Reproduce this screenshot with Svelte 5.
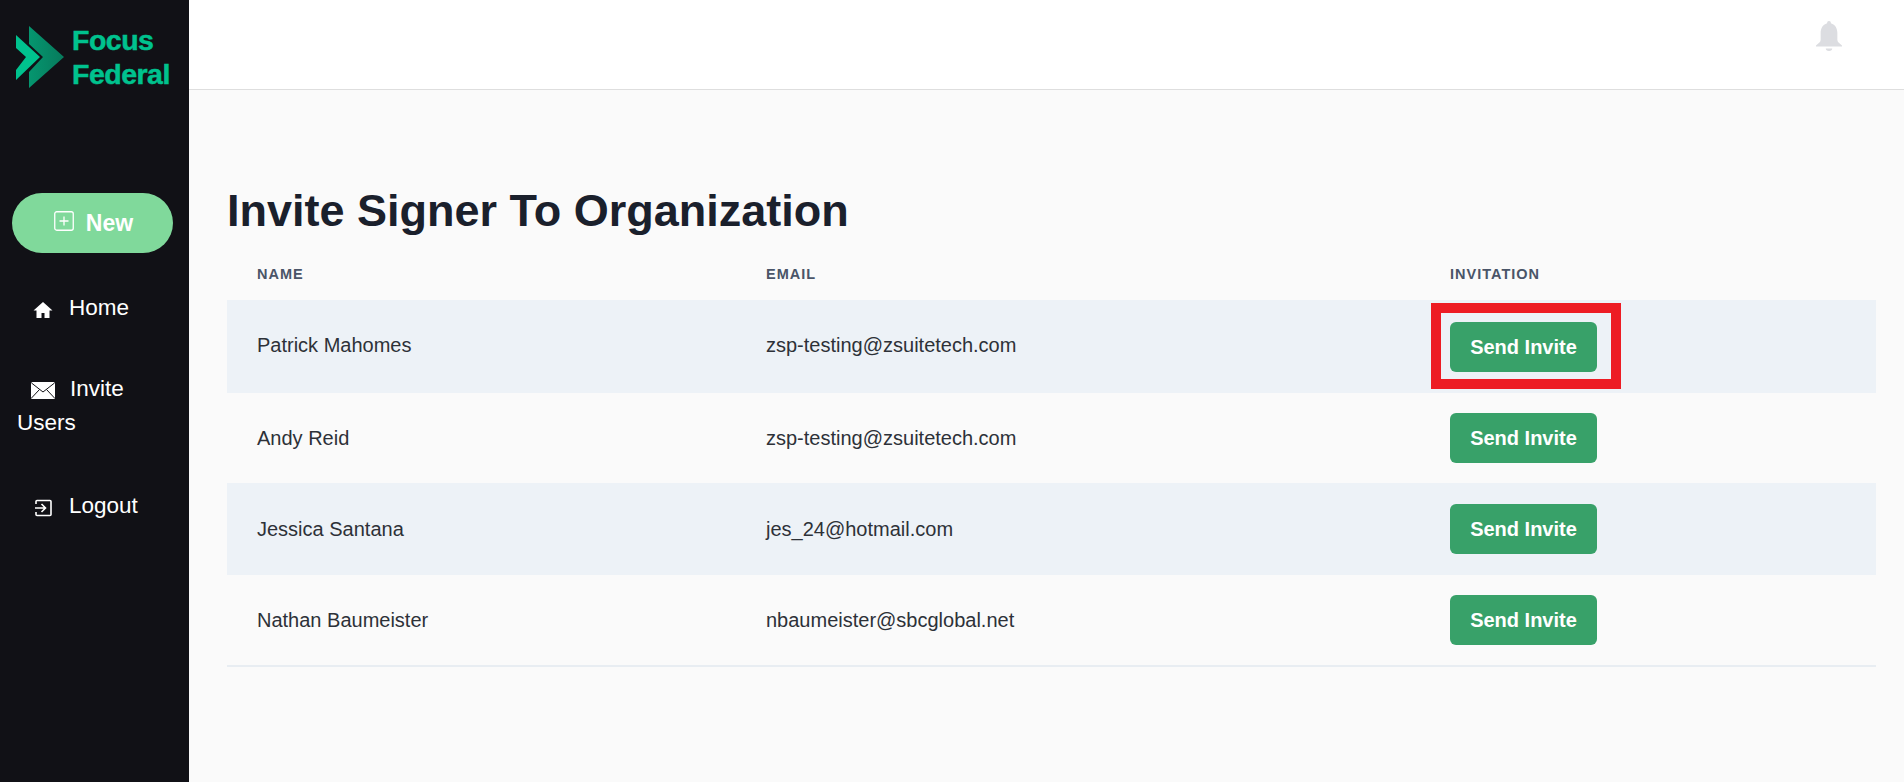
<script>
  const rows = [
    { name: 'Patrick Mahomes', email: 'zsp-testing@zsuitetech.com' },
    { name: 'Andy Reid', email: 'zsp-testing@zsuitetech.com' },
    { name: 'Jessica Santana', email: 'jes_24@hotmail.com' },
    { name: 'Nathan Baumeister', email: 'nbaumeister@sbcglobal.net' }
  ];
</script>

<div class="layout">
  <aside class="sidebar">
    <div class="logo">
      <svg class="mark" viewBox="0 0 48 64" width="48" height="64">
        <defs>
          <linearGradient id="dark" x1="0" y1="0" x2="1" y2="0">
            <stop offset="0" stop-color="#05966f" />
            <stop offset="1" stop-color="#077a5c" />
          </linearGradient>
        </defs>
        <polygon points="13,1 48,32 13,63 13,47 27,32 13,19" fill="url(#dark)" />
        <polygon points="0,10 24,32 0,55 0,45 10,32 0,23" fill="#00c28e" />
      </svg>
      <div class="logo-text">Focus<br />Federal</div>
    </div>
    <button class="new">
      <svg viewBox="0 0 20 20" width="20" height="20" fill="none" stroke="#fff" stroke-width="1.3">
        <rect x="0.750" y="0.750" width="18.500" height="18.500" rx="2" />
        <path d="M10 5.500v9M5.500 10h9" />
      </svg>
      <span>New</span>
    </button>
    <nav class="nav">
      <a class="item home" href="#home">
        <svg class="ic" viewBox="0 0 20 20" width="20" height="20" fill="#fff">
          <path d="M10 2 0.500 10.500H3.500V18H8.500v-5h3v5h5V10.500h3z" />
        </svg>Home
      </a>
      <a class="item invite" href="#invite">
        <svg class="ic mail" viewBox="0 0 24 17" width="24" height="17">
          <rect width="24" height="17" rx="1.500" fill="#fff" />
          <path d="M0.500 1 12 10 23.500 1M0.500 16 8.500 7.500M23.500 16l-8-8.500" fill="none" stroke="#111116" stroke-width="1" />
        </svg>Invite Users
      </a>
      <a class="item logout" href="#logout">
        <svg class="ic" viewBox="0 0 20 20" width="20" height="20" fill="none" stroke="#fff" stroke-width="1.600">
          <path d="M3 6V3.500A1 1 0 0 1 4 2.500h13a1 1 0 0 1 1 1v13a1 1 0 0 1-1 1H4a1 1 0 0 1-1-1V14" />
          <path d="M2 10h10M8.500 6l4 4-4 4" />
        </svg>Logout
      </a>
    </nav>
  </aside>

  <div class="main">
    <header class="topbar">
      <svg class="bell" viewBox="0 0 28 30" width="26" height="30" preserveAspectRatio="none" fill="#dcdde1">
        <path d="M14 0a2 2 0 0 1 2 2.300C21 3.600 23 8 23 12v7c0 2 2.500 3.500 5 5.500v1H0v-1C2.500 22.500 5 21 5 19v-7c0-4 2-8.400 7-9.700A2 2 0 0 1 14 0z" />
        <path d="M10.500 27.500h7a3.500 2.500 0 0 1-7 0z" />
      </svg>
    </header>
    <main class="content">
      <h1>Invite Signer To Organization</h1>
      <table>
        <colgroup>
          <col class="c1" />
          <col class="c2" />
          <col />
        </colgroup>
        <thead>
          <tr>
            <th>Name</th>
            <th>Email</th>
            <th>Invitation</th>
          </tr>
        </thead>
        <tbody>
          {#each rows as row, i}
            <tr>
              <td>{row.name}</td>
              <td>{row.email}</td>
              <td class="action">
                <div class="wrap">
                  <button class="send">Send Invite</button>
                  {#if i === 0}<span class="mark-box"></span>{/if}
                </div>
              </td>
            </tr>
          {/each}
        </tbody>
      </table>
    </main>
  </div>
</div>

<style>
  :global(body) {
    margin: 0;
    font-family: "Liberation Sans", Arial, sans-serif;
    background: #fafafa;
  }
  .layout {
    display: flex;
    height: 782px;
    overflow: hidden;
  }
  .sidebar {
    width: 189px;
    flex: none;
    background: #111116;
    color: #fff;
    box-sizing: border-box;
    padding: 25px 12px 0 12px;
  }
  .logo {
    display: flex;
    align-items: flex-start;
    gap: 8px;
    margin-left: 4px;
    height: 62px;
  }
  .mark {
    flex: none;
  }
  .logo-text {
    color: #00c28e;
    font-weight: 700;
    font-size: 28.500px;
    line-height: 34px;
    letter-spacing: -0.500px;
    margin-top: -2px;
    -webkit-text-stroke: 0.500px #00c28e;
  }
  .new {
    width: 161px;
    height: 60px;
    margin-top: 106px;
    border: 0;
    border-radius: 30px;
    background: #80d99b;
    color: #fff;
    font: 700 23px "Liberation Sans", Arial, sans-serif;
    display: flex;
    align-items: center;
    justify-content: center;
    gap: 12px;
    padding: 0;
  }
  .new svg {
    margin-top: -5px;
    margin-left: 2px;
  }
  .nav {
    margin-top: 38px;
    display: flex;
    flex-direction: column;
  }
  .item {
    display: block;
    color: #fff;
    text-decoration: none;
    font-size: 22.500px;
    line-height: 34px;
    padding-left: 5px;
  }
  .ic {
    margin-left: 16px;
    margin-right: 16px;
    vertical-align: -5px;
  }
  .mail {
    margin-left: 14px;
    margin-right: 15px;
    vertical-align: -3px;
  }
  .invite {
    margin-top: 47px;
  }
  .logout {
    margin-top: 49px;
  }
  .main {
    flex: 1;
    min-width: 0;
  }
  .topbar {
    background: #fff;
    border-bottom: 1px solid #dedede;
    display: flex;
    justify-content: flex-end;
    padding: 21px 62px 0 0;
    height: 68px;
  }
  .bell {
    display: block;
  }
  .content {
    padding: 96px 28px 0 38px;
  }
  h1 {
    margin: 0;
    font-size: 45px;
    line-height: 50px;
    font-weight: 700;
    color: #1a202c;
  }
  table {
    width: 100%;
    table-layout: fixed;
    border-collapse: collapse;
    margin-top: 10px;
  }
  .c1 {
    width: 509px;
  }
  .c2 {
    width: 684px;
  }
  th {
    text-align: left;
    padding: 2px 0 0 30px;
    height: 52px;
    font-size: 14.500px;
    letter-spacing: 1px;
    text-transform: uppercase;
    color: #4a5568;
    font-weight: 700;
    vertical-align: middle;
  }
  td {
    padding: 20px 0 20px 30px;
    font-size: 20px;
    color: #2d3138;
    border-bottom: 1px solid transparent;
  }
  tbody tr:first-child td {
    padding-bottom: 22px;
  }
  tbody tr:first-child .action {
    padding-top: 22px;
    padding-bottom: 20px;
  }
  tbody tr:nth-child(2) td {
    padding-bottom: 19px;
  }
  tbody tr:nth-child(3) td {
    padding-top: 21px;
  }
  tbody tr:nth-child(odd) {
    background: #edf2f7;
  }
  tbody tr:last-child td {
    border-bottom: 2px solid #e8edf2;
  }
  .action {
    padding-left: 30px;
  }
  .wrap {
    position: relative;
    display: block;
    width: 147px;
    height: 50px;
  }
  .send {
    display: block;
    width: 147px;
    height: 50px;
    border: 0;
    border-radius: 6px;
    background: #38a169;
    color: #fff;
    font: 700 20px "Liberation Sans", Arial, sans-serif;
    padding: 0;
  }
  .mark-box {
    position: absolute;
    left: -19px;
    top: -19px;
    width: 170px;
    height: 66px;
    border: 10px solid #ed1c24;
  }
</style>
